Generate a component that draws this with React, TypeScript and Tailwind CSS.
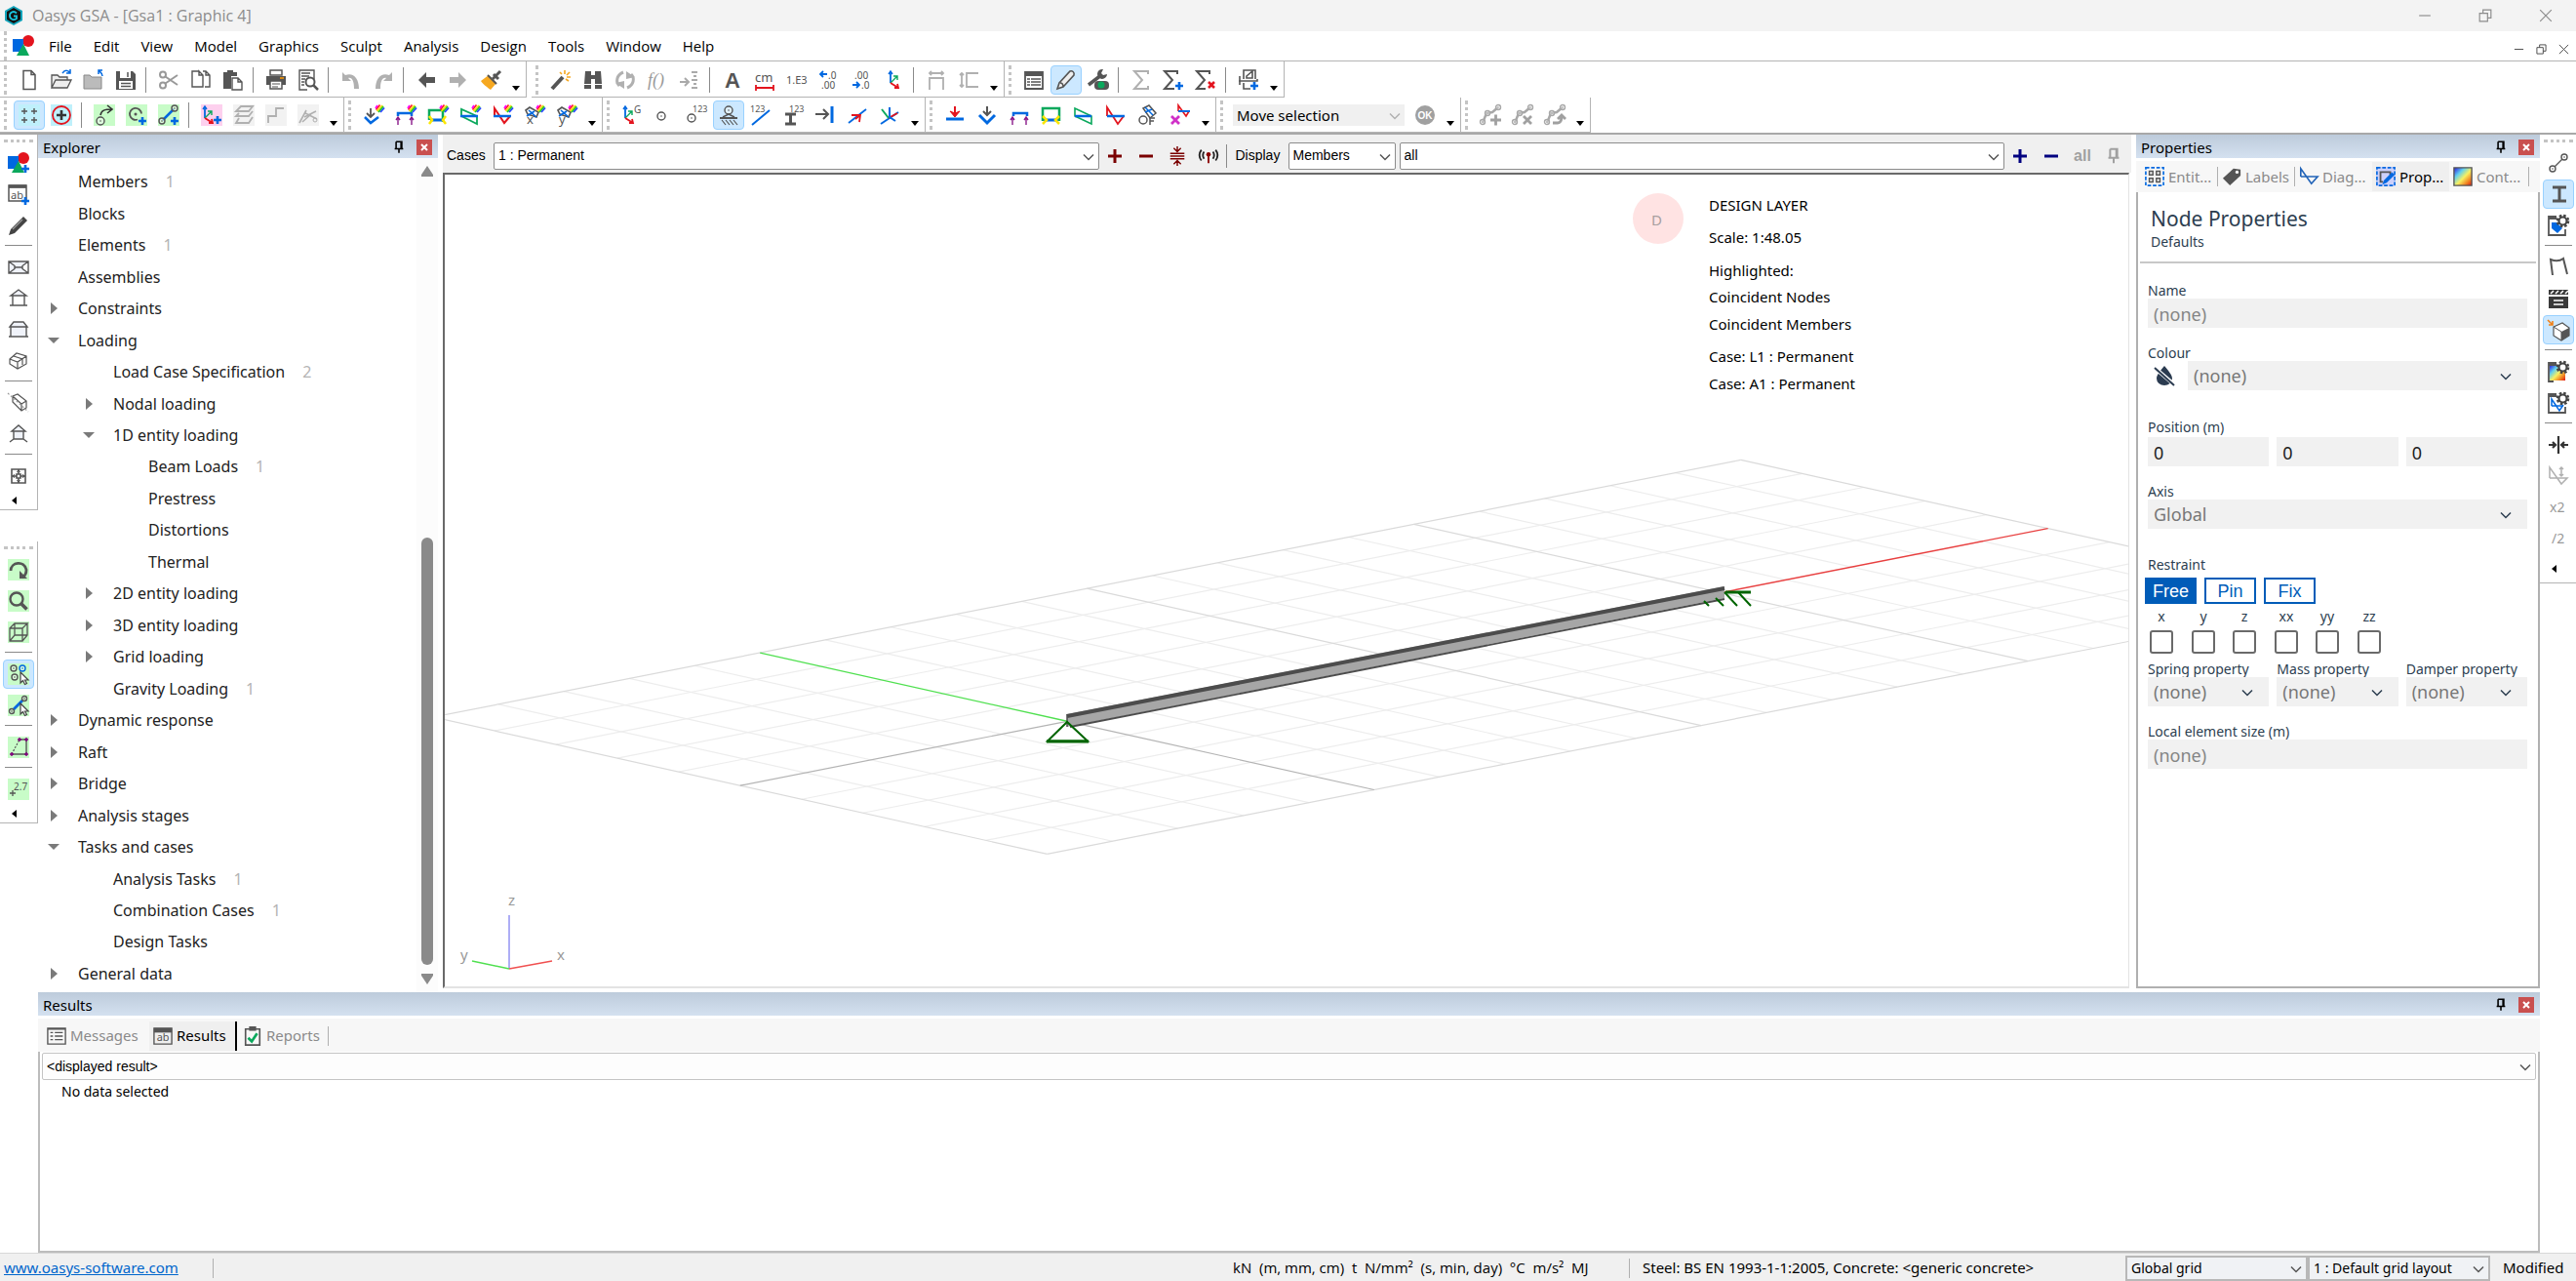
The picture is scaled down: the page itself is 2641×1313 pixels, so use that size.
import { useState } from "react";
import type { ReactNode } from "react";
import clsx from "clsx";

const INK = "#555555";
const BLUE = "#0068e0";
const RED = "#e3141e";
const GREEN = "#0aa85c";
const PURPLE = "#8a1a8a";
const GREY = "#b0b0b0";

/* ---------- icon building blocks ---------- */

function Plus({ x, y, color = BLUE }: { x: number; y: number; color?: string }) {
  return <path d={`M${x - 4} ${y}h8M${x} ${y - 4}v8`} stroke={color} strokeWidth="2.6" />;
}

function Cross({ x, y, color = RED }: { x: number; y: number; color?: string }) {
  return <path d={`M${x - 3} ${y - 3}l6 6m0-6l-6 6`} stroke={color} strokeWidth="2.6" />;
}

function Dot({ x, y, r = 3, color = INK }: { x: number; y: number; r?: number; color?: string }) {
  return (
    <g>
      <circle cx={x} cy={y} r={r} fill="#fff" fillOpacity="0.4" stroke={color} strokeWidth="1.4" />
      <circle cx={x} cy={y} r="0.8" fill={color} />
    </g>
  );
}

function Tile({ fill }: { fill: string }) {
  return <path d="M0 0h22v22H0z" fill={fill} />;
}

function Ball() {
  return (
    <g strokeWidth="1.8" fill="none">
      <path d="M13.500 5.500l4-5" stroke="#f22" />
      <path d="M14.500 7l5.500-6" stroke="#fd0" />
      <path d="M16 8l5-6" stroke="#2c2" />
      <path d="M18 8l4-4.500" stroke="#24f" />
      <path d="M13 4l2-3" stroke="#f0f" />
    </g>
  );
}

function Gear() {
  return (
    <g>
      <circle cx="15.500" cy="6.500" r="5.600" fill="none" stroke="#444" strokeWidth="2.400" strokeDasharray="2.500 1.900" />
      <circle cx="15.500" cy="6.500" r="4" fill="#fff" stroke="#444" strokeWidth="2.200" />
    </g>
  );
}

function Label({ x, y, size, color = INK, children }: { x: number; y: number; size: number; color?: string; children: string }) {
  return (
    <text x={x} y={y} fontSize={size} fill={color} stroke="none" fontFamily="Noto Sans, sans-serif">
      {children}
    </text>
  );
}

function Triad({ x = 0 }: { x?: number }) {
  return (
    <g fill="none" strokeWidth="1.800">
      <path d={`M${x + 4} 2v12`} stroke={BLUE} />
      <path d={`M${x + 2} 5l2-3 2 3`} stroke={BLUE} strokeWidth="1.400" />
      <path d={`M${x + 4} 14l7-7m-4 0h4v4`} stroke={GREEN} strokeWidth="1.400" />
      <path d={`M${x + 4} 14l8 5m-1-4l1 4h-4`} stroke={RED} />
    </g>
  );
}

function Member({ color = "#a8a8a8" }: { color?: string }) {
  return (
    <g>
      <path d="M3 19l4-10 6-1 6-5" stroke={color} strokeWidth="2.500" />
      <Dot x={3} y={18} r={2.5} color={color} />
      <Dot x={8} y={9} r={2.5} color={color} />
      <Dot x={19} y={3} r={2.5} color={color} />
    </g>
  );
}

const cursor = <path d="M13 9v11l2.500-2.500 2 4 2-1-2-3.500h3.500z" fill="#fff" stroke="#444" strokeWidth="1.200" />;
const shapes = (
  <g>
    <circle cx="16" cy="6" r="6" fill={RED} />
    <path d="M0 4h11v13H0z" fill={BLUE} />
    <path d="M11 9l6 12H4z" fill={GREEN} />
  </g>
);
const windowFrame = <path d="M1 2h18v16H1zM1 4h18" stroke={INK} strokeWidth="1.500" />;

const ICONS: Record<string, ReactNode> = {
  new: <path d="M5 1.500h8l4 4v15H5zM13 1.500v4h4" stroke={INK} strokeWidth="1.500" />,
  open: (
    <g>
      <path d="M1 19V6h6l2 2h8v3M1 19l4-8h16l-4 8z" fill="#eee" stroke={INK} strokeWidth="1.300" />
      <path d="M12 4c3-4 6-3 8 0m0-4v4h-4" stroke={BLUE} strokeWidth="1.500" />
    </g>
  ),
  closeFile: (
    <g>
      <path d="M1 6h6l2 2h10v12H1z" fill="#bbb" stroke="#888" />
      <path d="M20 7c0-3-2-4-4-6m0 4V1h4" stroke={BLUE} strokeWidth="1.500" />
    </g>
  ),
  save: (
    <g>
      <path d="M1 2h17l3 3v16H1z" fill={INK} />
      <path d="M5 2h11v7H5zM4 12h14v8H4z" fill="#fff" />
      <path d="M6 14.500h10M6 17.500h10M13 3v5" stroke={INK} strokeWidth="1.500" />
    </g>
  ),
  cut: (
    <g stroke="#999" strokeWidth="2">
      <circle cx="5" cy="5.500" r="3" />
      <circle cx="5" cy="16.500" r="3" />
      <path d="M7.500 7.500L20 16M7.500 14.500L20 6" />
    </g>
  ),
  copy: <path d="M9 2H2v16h11V6L9 2v4h4M13 2h3l4 4v12h-5M16 2v4h4" stroke={INK} strokeWidth="1.400" />,
  paste: (
    <g>
      <path d="M1 3h4V1h6v2h4v4H9v13H1z" fill={INK} />
      <path d="M10 9h6l4 4v8H10zM16 9v4h4" fill="#fff" stroke={INK} strokeWidth="1.400" />
    </g>
  ),
  print: (
    <g>
      <path d="M5 1h12v5H5z" stroke={INK} strokeWidth="1.500" />
      <path d="M1 7h20v9H1z" fill={INK} />
      <path d="M5 12h12v8H5z" fill="#fff" stroke={INK} strokeWidth="1.500" />
      <path d="M7 15h8M7 18h6" stroke={INK} />
      <path d="M15 9h4" stroke="#f90" strokeWidth="1.500" />
    </g>
  ),
  preview: (
    <g>
      <path d="M17 10V1H2v20h8M4 4h9M4 7h8M4 10h4M4 13h3M4 16h3" stroke={INK} strokeWidth="1.400" />
      <circle cx="13" cy="13" r="4.500" fill="#fff" stroke={INK} strokeWidth="2" />
      <path d="M16 16l5 5" stroke={INK} strokeWidth="2.500" />
    </g>
  ),
  undo: <path d="M2 3v9h9L8 9c4-1 6 3 6 11h5C19 9 13 3 5 6z" fill={GREY} />,
  redo: <path d="M20 3v9h-9l3-3c-4-1-6 3-6 11H3C3 9 9 3 17 6z" fill={GREY} />,
  back: <path d="M3 11l8-8v5h9v6h-9v5z" fill={INK} />,
  forward: <path d="M19 11l-8-8v5H2v6h9v5z" fill={GREY} />,
  brush: (
    <g>
      <path d="M21 2l-8 8M14 5l5 5" stroke={INK} strokeWidth="3" />
      <path d="M9 6l8 8-6 7C8 19 3 15 1 12z" fill="#f6a820" />
      <path d="M8 6l9 9" stroke={INK} strokeWidth="2" />
    </g>
  ),
  wand: (
    <g>
      <path d="M2 20L13 8" stroke={INK} strokeWidth="4" />
      <path d="M15 1v4M10 3l2 2M20 3l-3 3M21 8h-4M19 12l-3-2" stroke="#f6a820" strokeWidth="1.600" />
    </g>
  ),
  find: (
    <g fill={INK}>
      <path d="M3 2h6v4h4V2h6l1 13h-7v-5H9v5H2zM2 16h7v4H2zM13 16h7v4h-7z" />
    </g>
  ),
  refresh: (
    <g>
      <path d="M9 3C2 6 1 13 5 17M13 19c7-3 8-10 4-14" stroke={GREY} strokeWidth="3" />
      <path d="M1 14l9-2v8zM21 8l-9 2V2z" fill={GREY} />
    </g>
  ),
  fx: <text x="1" y="17" fontSize="18" fontStyle="italic" fill="#999" fontFamily="Liberation Serif, serif">f()</text>,
  indent: <path d="M1 13h8m-3-4l4 4-4 4M13 3h6M15 7h3M13 11h6M15 15h3M13 19h6" stroke="#aaa" strokeWidth="2" />,
  font: <text x="3" y="19" fontSize="22" fontWeight="700" fill={INK} fontFamily="Liberation Sans, sans-serif">A</text>,
  units: (
    <g>
      <Label x={1} y={13} size={13}>cm</Label>
      <path d="M2 19h18M2 16v6M20 16v6" stroke={RED} strokeWidth="1.800" />
    </g>
  ),
  engineering: <Label x={0} y={15} size={11}>1.E3</Label>,
  lessDecimals: (
    <g>
      <Label x={10} y={10} size={10}>.0</Label>
      <Label x={3} y={20} size={10}>.00</Label>
      <path d="M9 5H2m3-3L2 5l3 3" stroke={BLUE} strokeWidth="1.800" />
    </g>
  ),
  moreDecimals: (
    <g>
      <Label x={4} y={10} size={10}>.00</Label>
      <Label x={11} y={20} size={10}>.0</Label>
      <path d="M2 16h7m-3-3l3 3-3 3" stroke={BLUE} strokeWidth="1.800" />
    </g>
  ),
  axes: <Triad x={4} />,
  spaceX: <path d="M4 4h14M6 2L4 4l2 2M16 2l2 2-2 2M4 21V9h14v12" stroke={GREY} strokeWidth="1.800" />,
  spaceY: <path d="M4 4v14M2 6l2-2 2 2M2 16l2 2 2-2M21 4H9v14h12" stroke={GREY} strokeWidth="1.800" />,
  list: (
    <g>
      <path d="M2 3h18v17H2z" stroke={INK} strokeWidth="1.800" />
      <path d="M2 5h18" stroke={INK} strokeWidth="4" />
      <path d="M4 10h3m1 0h10M4 13h3m1 0h10M4 16h3m1 0h10" stroke={INK} strokeWidth="1.600" />
    </g>
  ),
  pencil: <path d="M2 20l2-6L15 2c2-1 5 1 4 4L8 18zM5 14c2 0 3 1 3 4" fill="#eee" stroke={INK} strokeWidth="1.600" />,
  pencilDark: (
    <g>
      <path d="M1 21l2-6L16 2l4 4L7 19z" fill="#444" />
      <path d="M5 15L15 5" stroke="#999" strokeWidth="1.200" />
    </g>
  ),
  tools: (
    <g>
      <path d="M1 16L14 6" stroke={INK} strokeWidth="3.500" />
      <path d="M20 5a5 5 0 1 1-4-5l-2 4 2 2z" fill={INK} />
      <rect x="7" y="12" width="15" height="9" rx="4" fill={INK} />
      <circle cx="14" cy="16" r="3.500" fill={GREEN} />
    </g>
  ),
  sum: <path d="M18 5V2H4l8 9-8 9h14v-3" stroke={GREY} strokeWidth="2" />,
  sumAdd: (
    <g>
      <path d="M15 5V2H2l8 9-8 9h10" stroke={INK} strokeWidth="2" />
      <Plus x={17} y={17} />
    </g>
  ),
  sumDelete: (
    <g>
      <path d="M15 5V2H2l8 9-8 9h9" stroke={INK} strokeWidth="2" />
      <Cross x={17} y={16} />
    </g>
  ),
  plotAdd: (
    <g>
      <path d="M6 10V1h12v9M2 7v9M1 12h19v-2M6 14v6h7M9 9V7l6-5v7z" stroke={INK} strokeWidth="1.600" />
      <Plus x={17} y={17} />
    </g>
  ),
  gridPoints: (
    <g>
      <Tile fill="#bff0fb" />
      <path d="M3 7h6M6 4v6M13 7h6M16 4v6M3 16h6M6 13v6M13 16h6M16 13v6" stroke={INK} strokeWidth="1.400" />
    </g>
  ),
  addNode: (
    <g>
      <Tile fill="#bff0fb" />
      <circle cx="11" cy="11" r="9" stroke={RED} strokeWidth="1.800" />
      <path d="M6 11h10M11 6v10" stroke="#333" strokeWidth="2.600" />
    </g>
  ),
  moveArc: (
    <g>
      <Tile fill="#c8fcc8" />
      <Dot x={7} y={17} r={4} />
      <path d="M7 11c1-5 4-6 12-6M14 1l5 4-5 4" stroke="#333" strokeWidth="1.600" />
    </g>
  ),
  nodeAdd: (
    <g>
      <Tile fill="#c8fcc8" />
      <path d="M12 15.500a6 6 0 1 1 4-6" stroke={INK} strokeWidth="1.800" />
      <circle cx="10" cy="10" r="1.500" fill={INK} />
      <Plus x={17} y={17} />
    </g>
  ),
  memberAdd: (
    <g>
      <Tile fill="#c8fcc8" />
      <path d="M5 16L16 5" stroke={BLUE} strokeWidth="2.500" />
      <Dot x={4} y={17} />
      <Dot x={17} y={4} />
      <Plus x={17} y={17} />
    </g>
  ),
  axesAdd: (
    <g>
      <Tile fill="#fdd0ee" />
      <Triad />
      <Plus x={17} y={16} />
    </g>
  ),
  storeys: (
    <g>
      <Tile fill="#f2f2f2" />
      <path d="M8 2h12l-4 5H3zM6 9L3 12h13l4-5M6 14l-3 5h13l4-6" stroke={GREY} strokeWidth="1.800" />
    </g>
  ),
  step: (
    <g>
      <Tile fill="#f2f2f2" />
      <path d="M3 19v-7h8V4h8" stroke={GREY} strokeWidth="1.800" />
    </g>
  ),
  cutSection: (
    <g>
      <Tile fill="#f2f2f2" />
      <path d="M2 19L9 6M8 9l12 6M7 13l12-6M5 18l9-8" stroke={GREY} strokeWidth="1.600" />
      <circle cx="18" cy="16" r="2" stroke={GREY} />
    </g>
  ),
  contourNode: (
    <g>
      <path d="M8 4v8M4 9l4 4 4-4" stroke={INK} strokeWidth="1.800" />
      <path d="M2 13l6 6 8-6" stroke={BLUE} strokeWidth="2.500" />
      <Ball />
    </g>
  ),
  contourBeam: (
    <g>
      <path d="M3 12V9h14v3" stroke={BLUE} strokeWidth="2.500" />
      <path d="M3 21v-7M1 16l2-3 2 3M17 21v-7M15 16l2-3 2 3" stroke={PURPLE} strokeWidth="1.400" />
      <Ball />
    </g>
  ),
  contourElement: (
    <g>
      <path d="M2 16V6h14v12" stroke={GREEN} strokeWidth="2.500" />
      <path d="M3 16h14" stroke={BLUE} strokeWidth="3" />
      <path d="M2 12l3 4-3 4M19 12l-3 4 3 4" stroke="#fbe600" strokeWidth="2.500" />
      <Ball />
    </g>
  ),
  contourShear: (
    <g>
      <path d="M2 5v7l16 8v-8z" stroke={GREEN} strokeWidth="1.800" />
      <path d="M1 12h18" stroke={BLUE} strokeWidth="2.500" />
      <Ball />
    </g>
  ),
  contourMoment: (
    <g>
      <path d="M3 12V4l10 15 6-7" stroke={RED} strokeWidth="2" />
      <path d="M2 12h18" stroke={BLUE} strokeWidth="2.500" />
      <Ball />
    </g>
  ),
  contourX: (
    <g>
      <path d="M2 6l4-3 9 5-2 5-9-3z" stroke={INK} strokeWidth="1.600" />
      <path d="M3 12l8-5M5 6l8 7" stroke={BLUE} strokeWidth="1.600" />
      <Label x={3} y={20} size={13}>x</Label>
      <Ball />
    </g>
  ),
  contourY: (
    <g>
      <path d="M2 6l4-3 9 5-2 5-9-3z" stroke={INK} strokeWidth="1.600" />
      <path d="M3 12l8-5M5 6l8 7" stroke={BLUE} strokeWidth="1.600" />
      <Label x={3} y={20} size={13}>y</Label>
      <Ball />
    </g>
  ),
  axesG: (
    <g>
      <Triad />
      <Label x={13} y={9} size={10}>G</Label>
    </g>
  ),
  node: <Dot x={8} y={12} r={4} />,
  node123: (
    <g>
      <Dot x={6} y={14} r={4} />
      <Label x={7} y={8} size={9}>123</Label>
    </g>
  ),
  support: (
    <g>
      <Dot x={11} y={6} r={4} />
      <path d="M5 13l6-3 6 3" stroke={INK} strokeWidth="1.500" />
      <path d="M2 14h18" stroke={INK} strokeWidth="2" />
      <path d="M4 16l4 5M8 16l4 5M12 16l4 5M16 16l4 5" stroke={INK} strokeWidth="1.200" />
    </g>
  ),
  line123: (
    <g>
      <path d="M2 21L20 6" stroke={BLUE} strokeWidth="2" />
      <Label x={0} y={8} size={9}>123</Label>
    </g>
  ),
  section123: (
    <g>
      <path d="M3 10h11M3 20h11M8.500 10v10" stroke={INK} strokeWidth="3" />
      <Label x={7} y={8} size={9}>123</Label>
    </g>
  ),
  fixity: (
    <g>
      <path d="M1 10h13m-5-5l5 5-5 5" stroke={INK} strokeWidth="2" />
      <path d="M18 2v17" stroke={BLUE} strokeWidth="3" />
    </g>
  ),
  direction: (
    <g>
      <path d="M2 19L20 5" stroke={BLUE} strokeWidth="1.800" />
      <path d="M5 11h9l-1 7M14 11l-5 4" stroke={RED} strokeWidth="1.800" />
    </g>
  ),
  localAxes: (
    <g>
      <path d="M2 20L20 8" stroke={BLUE} strokeWidth="2" />
      <path d="M10 14l9-5" stroke={RED} strokeWidth="2" />
      <path d="M10 14L3 5" stroke={GREEN} strokeWidth="2" />
      <path d="M11 3v10l6 4" stroke={BLUE} strokeWidth="2" />
    </g>
  ),
  loadPoint: (
    <g>
      <path d="M11 2v8" stroke={RED} strokeWidth="2" />
      <path d="M6 7l5 6 5-6-5 2z" fill={RED} stroke={RED} />
      <path d="M2 15h18" stroke={BLUE} strokeWidth="3" />
    </g>
  ),
  loadNode: (
    <g>
      <path d="M11 2v8M7 7l4 4 4-4" stroke={INK} strokeWidth="2" />
      <path d="M3 11l8 8 8-8" stroke={BLUE} strokeWidth="3" />
    </g>
  ),
  reaction: (
    <g>
      <path d="M5 12V9h14v3" stroke={BLUE} strokeWidth="2.500" />
      <path d="M4 21v-8M2 16l2-3 2 3M18 21v-8M16 16l2-3 2 3" stroke={PURPLE} strokeWidth="1.400" />
    </g>
  ),
  elementForce: (
    <g>
      <path d="M2 17V4h17v13" stroke={GREEN} strokeWidth="2.500" />
      <path d="M3 16h15" stroke={BLUE} strokeWidth="3" />
      <path d="M2 12l4 4-4 4M19 12l-4 4 4 4" stroke="#fbe600" strokeWidth="2.500" />
    </g>
  ),
  shear: (
    <g>
      <path d="M2 4v8l17 8v-8z" stroke={GREEN} strokeWidth="1.600" />
      <path d="M2 12h17" stroke={BLUE} strokeWidth="2.500" />
    </g>
  ),
  moment: (
    <g>
      <path d="M2 12V3l11 17 6-8" stroke={RED} strokeWidth="1.800" />
      <path d="M2 12h18" stroke={BLUE} strokeWidth="2.500" />
    </g>
  ),
  mode: (
    <g stroke={INK} strokeWidth="1.500">
      <path d="M6 4l6-3 7 8-6 5z" />
      <path d="M8 8l7-3M8 3l8 8" stroke={BLUE} />
      <circle cx="6" cy="16" r="4" />
      <path d="M13 21v-7h5M13 17h4" />
    </g>
  ),
  deleteDiagram: (
    <g>
      <path d="M2 12l8 8m0-8l-8 8" stroke="#d030c8" strokeWidth="2.800" />
      <path d="M9 7V1l8 11 3-5" stroke={RED} strokeWidth="1.600" />
      <path d="M9 7h12" stroke={BLUE} strokeWidth="2" />
    </g>
  ),
  ok: (
    <g>
      <circle cx="11" cy="11" r="10" fill="#a0a0a0" />
      <text x="11" y="15" fontSize="10" fontWeight="700" fill="#fff" textAnchor="middle" fontFamily="Liberation Sans, sans-serif">OK</text>
    </g>
  ),
  splitAdd: (
    <g>
      <Member />
      <path d="M11 16h11M16.500 10.500v11" stroke="#a0a0a0" strokeWidth="2.800" />
    </g>
  ),
  splitDelete: (
    <g>
      <Member />
      <path d="M12 12l8 8m0-8l-8 8" stroke="#a0a0a0" strokeWidth="2.800" />
    </g>
  ),
  splitTurn: (
    <g>
      <Member />
      <path d="M9 19h5c3 0 4-2 4-7M14 15l4-4 4 4" stroke="#a0a0a0" strokeWidth="2.800" />
    </g>
  ),
  shapesAdd: (
    <g>
      {shapes}
      <Plus x={18} y={17} />
    </g>
  ),
  outputAdd: (
    <g>
      {windowFrame}
      <path d="M1 3h18" stroke={INK} strokeWidth="3" />
      <Label x={3} y={16} size={11}>ab</Label>
      <Plus x={18} y={18} />
    </g>
  ),
  plan: <path d="M1 5h20v12H1zM1 5l6 4.500v3L1 17M21 5l-6 4.500v3l6 4.500M7 11h8" fill="#f0f3fa" stroke={INK} strokeWidth="1.400" />,
  front: <path d="M5 18V7M17 18V7M2 18h18M3 8h16L11 2z" stroke={INK} strokeWidth="1.400" fill="#f0f3fa" />,
  side: <path d="M3 18V8h16v10M1 18h20M2 8l4-5h10l4 5z" stroke={INK} strokeWidth="1.400" fill="#f0f3fa" />,
  isometric: <path d="M2 9l7-6 10 3v8l-9 5-8-5zM2 9l8 3 9-6M10 12v7M6 6l9 3v6" stroke={INK} strokeWidth="1.200" />,
  section3d: (
    <g stroke={INK} strokeWidth="1.200">
      <path d="M5 4l5-2 9 7v7l-5 3-9-9zM5 4l9 8v7M14 12l5-3" />
      <path d="M0 1l21 19" strokeDasharray="2 2" stroke="#999" />
    </g>
  ),
  perspective: <path d="M6 16V8h10v8zM6 16l-4 3M16 16l4 3M4 8h14L11 2z" stroke={INK} strokeWidth="1.400" fill="#f0f3fa" />,
  fit: (
    <g stroke={INK}>
      <path d="M4 4h14v14H4z" strokeWidth="1.600" />
      <path d="M11 4v5M11 13v5M4 11h5M13 11h5M9 9h4v4H9z" strokeWidth="1.600" />
      <path d="M9.500 7l1.500-2 1.500 2M9.500 15l1.500 2 1.500-2M7 9.500L5 11l2 1.500M15 9.500l2 1.500-2 1.500" strokeWidth="1.200" />
    </g>
  ),
  rotate: (
    <g>
      <Tile fill="#c8fcc8" />
      <path d="M3 12c0-9 14-11 16-1 0 4-1 6-4 8" stroke={INK} strokeWidth="2.800" />
      <path d="M12 12v8h8z" fill={INK} />
    </g>
  ),
  zoom: (
    <g>
      <Tile fill="#c8fcc8" />
      <circle cx="9" cy="9" r="6.500" stroke={INK} strokeWidth="2.400" />
      <path d="M13.500 13.500l6 6" stroke={INK} strokeWidth="3.500" />
    </g>
  ),
  volume: (
    <g>
      <Tile fill="#c8fcc8" />
      <path d="M2 7h13v13H2zM2 7l5-5h13l-5 5M20 2v12l-5 6M7 2v12h13M7 14l-5 6" stroke={INK} strokeWidth="1.300" />
    </g>
  ),
  selectNodes: (
    <g>
      <Tile fill="#c8fcc8" />
      <Dot x={6} y={5} />
      <Dot x={15} y={5} color={BLUE} />
      <Dot x={7} y={14} />
      {cursor}
    </g>
  ),
  selectMembers: (
    <g>
      <Tile fill="#c8fcc8" />
      <path d="M6 15L15 6" stroke={BLUE} strokeWidth="2.800" />
      <Dot x={4} y={17} r={2.5} />
      <Dot x={17} y={4} r={2.5} />
      {cursor}
    </g>
  ),
  polygon: (
    <g>
      <Tile fill="#c8fcc8" />
      <path d="M12 3h7v15H4" stroke={INK} strokeWidth="1.400" />
      <path d="M4 18l8-15" stroke={INK} strokeWidth="1.200" strokeDasharray="2 1.500" />
      <path d="M10 3h4M12 1v4M17 3h4M19 1v4M17 18h4M19 16v4M2 18h4M4 16v4" stroke="#80007c" strokeWidth="1.400" />
    </g>
  ),
  coordinate: (
    <g>
      <Tile fill="#c8fcc8" />
      <Label x={6} y={12} size={10}>2.7</Label>
      <path d="M2 15h6M5 12v6" stroke={INK} strokeWidth="1.300" />
    </g>
  ),
  link: (
    <g>
      <path d="M7 15l8-8" stroke={INK} strokeWidth="1.200" />
      <Dot x={5} y={17} />
      <Dot x={17} y={5} />
    </g>
  ),
  section: <path d="M5 4h14M5 18h14M12 4v14" stroke={INK} strokeWidth="3" />,
  labelSettings: (
    <g>
      <path d="M9 2H1v19h17v-6M1 4h8" stroke={INK} strokeWidth="1.800" />
      <path d="M4 8h5l6 6-5 5-6-5z" fill={BLUE} />
      <Gear />
    </g>
  ),
  deformed: <path d="M5 19L3 3c5 2 9 2 13-1l4 16" stroke={INK} strokeWidth="2" />,
  animate: (
    <g>
      <path d="M1 9h20v12H1zM1 2h20v5H1z" fill="#3a3a3a" />
      <path d="M3 6l3-3M8 6l3-3M13 6l3-3M18 6l3-3M6 13h10M6 17h10" stroke="#fff" strokeWidth="1.500" />
    </g>
  ),
  solid: (
    <g>
      <path d="M6 8l9-4 7 5v8l-8 5-8-5z" fill="#fff" stroke={INK} strokeWidth="1.200" />
      <path d="M14 13l8-4v8l-8 5z" fill="#555" />
      <path d="M6 8l8 5v9" stroke={INK} />
      <path d="M0 1l5 5M5 2v4H1" stroke="#f08018" strokeWidth="1.600" />
    </g>
  ),
  contourSettings: (
    <g>
      <path d="M2 4h16v16H2z" fill="url(#spectrum)" />
      <path d="M9 2H1v19h5M1 4h8" stroke={INK} strokeWidth="1.800" />
      <Gear />
    </g>
  ),
  diagramSettings: (
    <g>
      <path d="M9 2H1v19h17v-6M1 4h8" stroke={INK} strokeWidth="1.800" />
      <path d="M4 14V7l8 12 4-6M4 14h12" stroke={BLUE} strokeWidth="1.500" />
      <Gear />
    </g>
  ),
  mirror: <path d="M11 2v18M1 11h7m-3-3l3 3-3 3M21 11h-7m3-3l-3 3 3 3" stroke="#333" strokeWidth="2.200" />,
  scaleDiagram: <path d="M2 13V2l12 17 6-6H2M14 2v9M12 4l2-2 2 2M12 9l2 2 2-2" stroke={GREY} strokeWidth="1.500" />,
  double: <Label x={2} y={16} size={14} color="#999">x2</Label>,
  half: <Label x={4} y={16} size={14} color="#999">/2</Label>,
  entities: (
    <g>
      <path d="M1 1h20v20H1z" stroke={BLUE} strokeWidth="1.800" strokeDasharray="4 2" />
      <path d="M5 5h4v4H5zM13 5h4v4h-4zM5 13h4v4H5zM13 13h4v4h-4z" stroke={INK} strokeWidth="1.600" />
    </g>
  ),
  tag: (
    <g>
      <path d="M1 13L13 2l8 1v7L9 21z" fill={INK} />
      <circle cx="17" cy="6" r="1.800" fill="#fff" />
    </g>
  ),
  diagram: <path d="M2 11V2l12 17 7-8H2" stroke="#2264b8" strokeWidth="1.800" />,
  edit: (
    <g>
      <Tile fill="#ccd0fa" />
      <path d="M1 1h20v20H1z" stroke={BLUE} strokeWidth="1.800" strokeDasharray="4 2" />
      <path d="M8 17H5V6h11v3" stroke={INK} strokeWidth="2" />
      <path d="M7 20l2-5 9-9 3 3-9 9z" fill={BLUE} />
    </g>
  ),
  contours: <path d="M1 1h20v20H1z" fill="url(#spectrum)" stroke={INK} strokeWidth="1.500" />,
  messages: <path d="M1 2h20v18H1zM1 3h20M4 7h3M4 11h3M4 15h3M9 7h9M9 11h9M9 15h9" stroke={INK} strokeWidth="1.500" />,
  output: (
    <g>
      <path d="M1 2h20v18H1z" stroke={INK} strokeWidth="1.500" />
      <path d="M1 4.500h20" stroke={INK} strokeWidth="5" />
      <Label x={4} y={17} size={12}>ab</Label>
    </g>
  ),
  report: (
    <g>
      <path d="M3 3h16v18H3z" stroke={INK} strokeWidth="1.800" />
      <path d="M7 0h8v5H7z" fill={INK} />
      <path d="M6 13l4 4 6-9" stroke={GREEN} strokeWidth="3" />
    </g>
  ),
  noColour: (
    <g fill="#2b3b50">
      <path d="M11 1c4 5 8 9 8 13a8 7 0 0 1-16 0c0-4 4-8 8-13z" />
      <path d="M1 3l21 18" stroke="#fff" strokeWidth="4" />
      <path d="M1 3l20 18" stroke="#2b3b50" strokeWidth="2" />
    </g>
  ),
  pin: <path d="M7 3h8v10M7 3v10M5 13h12M11 13v6M14 3v10" stroke="currentColor" strokeWidth="2.200" />,
  compress: <path d="M3 8h16M3 11h16M3 14h16M11 0v6M7 2l4 4 4-4M11 22v-6M7 20l4-4 4 4" stroke="#7a0000" strokeWidth="1.600" />,
  beacon: (
    <g strokeWidth="2">
      <path d="M3 4c-3 4-3 8 0 12M6 6c-2 3-2 5 0 8M19 4c3 4 3 8 0 12M16 6c2 3 2 5 0 8" stroke="#222" />
      <path d="M11 10v9" stroke="#8a0000" />
      <circle cx="11" cy="9" r="2.500" fill="#8a0000" />
    </g>
  ),
};

function Icon({ name, size = "size-[22px]" }: { name: string; size?: string }) {
  return (
    <svg viewBox="0 0 22 22" className={clsx("shrink-0 overflow-visible", size)} fill="none" aria-hidden="true">
      {ICONS[name]}
    </svg>
  );
}

/* ---------- toolbars ---------- */

type Tool = string;
const SEP = "|";

const FILE_TOOLS: Tool[] = ["new", "open", "closeFile", "save", SEP, "cut", "copy", "paste", SEP, "print", "preview", SEP, "undo", "redo", SEP, "back", "forward", "brush"];
const FORMAT_TOOLS: Tool[] = ["wand", "find", "refresh", "fx", "indent", SEP, "font", "units", "engineering", "lessDecimals", "moreDecimals", "axes", SEP, "spaceX", "spaceY"];
const MODEL_TOOLS: Tool[] = ["list", "pencil", "tools", SEP, "sum", "sumAdd", "sumDelete", SEP, "plotAdd"];
const SCULPT_TOOLS: Tool[] = ["gridPoints", "addNode", SEP, "moveArc", "nodeAdd", "memberAdd", SEP, "axesAdd", "storeys", "step", "cutSection"];
const CONTOUR_TOOLS: Tool[] = ["contourNode", "contourBeam", "contourElement", "contourShear", "contourMoment", "contourX", "contourY"];
const LABEL_TOOLS: Tool[] = ["axesG", "node", "node123", "support", "line123", "section123", "fixity", "direction", "localAxes"];
const DIAGRAM_TOOLS: Tool[] = ["loadPoint", "loadNode", "reaction", "elementForce", "shear", "moment", "mode", "deleteDiagram"];
const SPLIT_TOOLS: Tool[] = ["splitAdd", "splitDelete", "splitTurn"];

const VIEW_TOOLS: Tool[] = ["shapesAdd", "outputAdd", "pencilDark", SEP, "plan", "front", "side", "isometric", SEP, "section3d", "perspective", SEP, "fit"];
const MOUSE_TOOLS: Tool[] = ["rotate", "zoom", "volume", SEP, "selectNodes", "selectMembers", SEP, "polygon", SEP, "coordinate"];
const DISPLAY_TOOLS: Tool[] = ["link", "section", "labelSettings", SEP, "deformed", "animate", "solid", SEP, "contourSettings", "diagramSettings", SEP, "mirror", "scaleDiagram", "double", "half"];

const ACTIVE = ["pencil", "gridPoints", "support", "selectNodes", "section", "solid"];

function ToolButton({ name }: { name: Tool }) {
  return (
    <button
      type="button"
      aria-label={name}
      className={clsx(
        "flex h-[30px] w-8 items-center justify-center rounded-sm border",
        ACTIVE.includes(name) ? "border-[#99d1ff] bg-[#cce8ff]" : "border-transparent",
      )}
    >
      <Icon name={name} />
    </button>
  );
}

function Grip() {
  return <div className="ml-1 h-[30px] w-[9px] shrink-0 border-l-[3px] border-dotted border-[#c4c4c4]" />;
}

function MoreButton() {
  return (
    <button type="button" aria-label="More buttons" className="flex h-[30px] w-5 items-end justify-center pb-1">
      <svg viewBox="0 0 8 5" className="w-2" aria-hidden="true">
        <path d="M0 0h8L4 5z" />
      </svg>
    </button>
  );
}

function ToolGroup({ tools = [], children }: { tools?: Tool[]; children?: ReactNode }) {
  return (
    <div className="flex h-full items-center border-r border-b border-[#b4b4b4] bg-white pt-px">
      <Grip />
      {children}
      {tools.map((tool, i) =>
        tool === SEP ? (
          <div key={i} className="ml-1 mr-[6px] h-[26px] w-px bg-[#8a8a8a]" />
        ) : (
          <div key={i} className="flex w-[33px] justify-center">
            <ToolButton name={tool} />
          </div>
        ),
      )}
      <MoreButton />
    </div>
  );
}

function SideTools({ tools, side }: { tools: Tool[]; side: "left" | "right" }) {
  return (
    <div className={clsx("flex flex-col items-center border-b border-[#b4b4b4] bg-white", side === "left" && "border-r")}>
      <div className="mt-[5px] mb-[5px] h-[3px] w-[30px] border-t-[3px] border-dotted border-[#c4c4c4]" />
      {tools.map((tool, i) =>
        tool === SEP ? (
          <div key={i} className="mt-1 mb-[6px] h-px w-7 bg-[#8a8a8a]" />
        ) : (
          <div key={i} className="flex h-8 items-center">
            <ToolButton name={tool} />
          </div>
        ),
      )}
      <button type="button" aria-label="More buttons" className={clsx("w-full pl-3", side === "left" ? "h-[18px]" : "h-[29px]")}>
        <svg viewBox="0 0 5 8" className="h-2 w-[5px]" aria-hidden="true">
          <path d="M5 0v8L0 4z" />
        </svg>
      </button>
    </div>
  );
}

function Chevron({ className }: { className?: string }) {
  return (
    <svg viewBox="0 0 12 8" className={clsx("pointer-events-none w-3", className)} fill="none" stroke="currentColor" aria-hidden="true">
      <path d="M1 1.500l5 5 5-5" strokeWidth="1.500" />
    </svg>
  );
}

type ComboProps = { label: string; value: string; className: string; height?: string; chevron?: string };

function Combo({ label, value, className, height = "h-7", chevron = "top-[10px] text-[#555]" }: ComboProps) {
  return (
    <div className={clsx("relative", height, className)}>
      <select aria-label={label} className="h-full w-full appearance-none bg-transparent px-1 outline-none">
        <option>{value}</option>
      </select>
      <Chevron className={clsx("absolute right-1", chevron)} />
    </div>
  );
}

function PanelHeader({ title }: { title: string }) {
  return (
    <div className="flex h-6 shrink-0 items-center justify-between bg-linear-to-b from-[#bdcbdb] to-[#d4e1f0] pt-px pr-[6px] pl-[5px] text-[15px] leading-6 text-black">
      <h2>{title}</h2>
      <div className="flex items-center gap-[10px]">
        <button type="button" aria-label={`Pin ${title}`}>
          <Icon name="pin" size="size-4" />
        </button>
        <button type="button" aria-label={`Close ${title}`} className="flex size-4 items-center justify-center bg-[#c9504f]">
          <svg viewBox="0 0 8 8" className="size-2" stroke="#fff" strokeWidth="2" aria-hidden="true">
            <path d="M1 1l6 6M7 1L1 7" />
          </svg>
        </button>
      </div>
    </div>
  );
}

/* ---------- explorer ---------- */

type TreeItem = { label: string; level: 0 | 1 | 2; count?: number; state?: "open" | "closed" };

const TREE: TreeItem[] = [
  { label: "Members", level: 0, count: 1 },
  { label: "Blocks", level: 0 },
  { label: "Elements", level: 0, count: 1 },
  { label: "Assemblies", level: 0 },
  { label: "Constraints", level: 0, state: "closed" },
  { label: "Loading", level: 0, state: "open" },
  { label: "Load Case Specification", level: 1, count: 2 },
  { label: "Nodal loading", level: 1, state: "closed" },
  { label: "1D entity loading", level: 1, state: "open" },
  { label: "Beam Loads", level: 2, count: 1 },
  { label: "Prestress", level: 2 },
  { label: "Distortions", level: 2 },
  { label: "Thermal", level: 2 },
  { label: "2D entity loading", level: 1, state: "closed" },
  { label: "3D entity loading", level: 1, state: "closed" },
  { label: "Grid loading", level: 1, state: "closed" },
  { label: "Gravity Loading", level: 1, count: 1 },
  { label: "Dynamic response", level: 0, state: "closed" },
  { label: "Raft", level: 0, state: "closed" },
  { label: "Bridge", level: 0, state: "closed" },
  { label: "Analysis stages", level: 0, state: "closed" },
  { label: "Tasks and cases", level: 0, state: "open" },
  { label: "Analysis Tasks", level: 1, count: 1 },
  { label: "Combination Cases", level: 1, count: 1 },
  { label: "Design Tasks", level: 1 },
  { label: "General data", level: 0, state: "closed" },
];

const INDENT = ["pl-[9px]", "pl-[45px]", "pl-[81px]"];

function Explorer() {
  return (
    <section className="flex w-[410px] shrink-0 flex-col">
      <PanelHeader title="Explorer" />
      <div className="flex min-h-0 flex-1">
        <ul className="flex min-w-0 flex-1 flex-col pt-2 pb-[3px] text-[16px] text-[#222]">
          {TREE.map((item) => (
            <li key={item.label} className={clsx("flex min-h-0 flex-1 items-center leading-6", INDENT[item.level])}>
              <svg viewBox="0 0 14 14" className="mr-[18px] size-[14px] shrink-0 fill-[#7a7a7a]" aria-hidden="true">
                {item.state === "closed" && <path d="M4 1v12l7-6z" />}
                {item.state === "open" && <path d="M1 4h12l-6 6z" />}
              </svg>
              {item.label}
              {item.count && <span className="ml-[18px] text-[#b4b4b4]">{item.count}</span>}
            </li>
          ))}
        </ul>
        <div className="flex w-[22px] flex-col items-center bg-[#fcfcfc] pt-2 pb-2">
          <svg viewBox="0 0 12 11" className="w-3 fill-[#8a8a8a]" aria-hidden="true">
            <path d="M6 0l6 9v2H0V9z" />
          </svg>
          <div className="flex-[370]" />
          <div className="w-3 flex-[437] rounded-full bg-[#8a8a8a]" />
          <svg viewBox="0 0 12 11" className="mt-[9px] w-3 fill-[#8a8a8a]" aria-hidden="true">
            <path d="M6 11l6-9V0H0v2z" />
          </svg>
        </div>
      </div>
    </section>
  );
}

/* ---------- graphic view ---------- */

// screen position of a grid point, grid axes run from -5 to 15 (x) and -5 to 5 (y)
function project(x: number, y: number) {
  return [1094 + x * 67.04 - y * 62.96, 738.3 - x * 13.18 - y * 14.04];
}

function GridLine({ from, to, stroke, width = 1.2 }: { from: [number, number]; to: [number, number]; stroke: string; width?: number }) {
  const [x1, y1] = project(...from);
  const [x2, y2] = project(...to);
  return <line x1={x1} y1={y1} x2={x2} y2={y2} stroke={stroke} strokeWidth={width} />;
}

const LEGEND: [number, string][] = [
  [215, "DESIGN LAYER"],
  [248, "Scale: 1:48.05"],
  [282, "Highlighted:"],
  [309, "Coincident Nodes"],
  [337, "Coincident Members"],
  [370, "Case: L1 : Permanent"],
  [398, "Case: A1 : Permanent"],
];

function ModelView() {
  const xs = Array.from({ length: 21 }, (_, i) => i - 5);
  const ys = Array.from({ length: 11 }, (_, i) => i - 5);
  return (
    <svg viewBox="456 179 1726 830" className="size-full" role="img" aria-label="Model view" fontFamily="Noto Sans, sans-serif">
      {xs.filter((x) => x % 5 !== 0).map((x) => (
        <GridLine key={`x${x}`} from={[x, -5]} to={[x, 5]} stroke="#ededed" />
      ))}
      {ys.filter((y) => y % 5 !== 0).map((y) => (
        <GridLine key={`y${y}`} from={[-5, y]} to={[15, y]} stroke="#ededed" />
      ))}
      {[-5, 5, 10, 15].map((x) => (
        <GridLine key={`mx${x}`} from={[x, -5]} to={[x, 5]} stroke="#dadada" />
      ))}
      {[-5, 5].map((y) => (
        <GridLine key={`my${y}`} from={[-5, y]} to={[15, y]} stroke="#dadada" />
      ))}
      <GridLine from={[-5, 0]} to={[0, 0]} stroke="#b4b4b4" />
      <GridLine from={[0, -5]} to={[0, 0]} stroke="#b4b4b4" />
      <GridLine from={[0, 0]} to={[15, 0]} stroke="#e84040" width={1.4} />
      <GridLine from={[0, 0]} to={[0, 5]} stroke="#50e050" width={1.4} />

      {/* beam */}
      <path d="M1094 731L1768 600v12L1094 744z" fill="#a6a6a6" />
      <path d="M1094 733L1768 602" stroke="#4c4c4c" strokeWidth="4" />
      <path d="M1097 744L1768 613" stroke="#4c4c4c" strokeWidth="1.8" />
      <path d="M1094 731v13" stroke="#4c4c4c" strokeWidth="1.5" />

      {/* supports */}
      <path d="M1094 739l-20 19.500h41z" fill="none" stroke="#006400" strokeWidth="2" />
      <path d="M1073 759h43" stroke="#006400" strokeWidth="3" />
      <path d="M1769 606h26" stroke="#006400" strokeWidth="3" />
      <path d="M1747 615l5 5M1759 612l8 8M1768 606l13 14M1782 606l13 14" stroke="#006400" strokeWidth="2" />

      {/* axis triad */}
      <path d="M522 992v-55" stroke="#7878f0" strokeWidth="1.2" />
      <path d="M522 992l44-8" stroke="#f05050" strokeWidth="1.4" />
      <path d="M522 992l-38-8" stroke="#50e050" strokeWidth="1.4" />
      <g fontSize="15" fill="#999">
        <text x="521" y="927">z</text>
        <text x="571" y="983">x</text>
        <text x="472" y="983">y</text>
      </g>

      <circle cx="1700" cy="223" r="26" fill="#ffe3e3" />
      <text x="1693" y="230" fontSize="15" fill="#a8a0a0">D</text>
      <g fontSize="15">
        {LEGEND.map(([y, line]) => (
          <text key={line} x="1752" y={y}>
            {line}
          </text>
        ))}
      </g>
    </svg>
  );
}

function Sign({ kind, color }: { kind: "plus" | "minus"; color: string }) {
  return (
    <svg viewBox="0 0 14 14" className="size-[14px]" stroke={color} strokeWidth="3" aria-hidden="true">
      <path d={kind === "plus" ? "M0 7h14M7 0v14" : "M0 7h14"} />
    </svg>
  );
}

function GraphicPane() {
  const iconButton = "flex w-8 justify-center";
  const field = "rounded-[2px] border border-[#8c8c8c] bg-white";
  return (
    <section className="flex min-w-0 flex-1 flex-col">
      <div className="flex h-[39px] shrink-0 items-center bg-[#f0f0f0] pl-1 pr-[2px] pt-1 font-['Liberation_Sans',sans-serif] text-[14px] text-black">
        <span className="w-12">Cases</span>
        <Combo label="Cases" value="1 : Permanent" className={clsx(field, "min-w-0 flex-[620]")} />
        <button type="button" aria-label="Next case" className={iconButton}>
          <Sign kind="plus" color="#7a0000" />
        </button>
        <button type="button" aria-label="Previous case" className={iconButton}>
          <Sign kind="minus" color="#7a0000" />
        </button>
        <button type="button" aria-label="Envelope" className={iconButton}>
          <Icon name="compress" size="size-5" />
        </button>
        <button type="button" aria-label="Dynamic" className={iconButton}>
          <Icon name="beacon" size="size-5" />
        </button>
        <div className="ml-[2px] mr-[9px] h-6 w-px bg-[#8a8a8a]" />
        <span className="w-[54px]">Display</span>
        <Combo label="Display" value="Members" className={clsx(field, "mr-1 w-[110px]")} />
        <Combo label="List" value="all" className={clsx(field, "min-w-0 flex-[620]")} />
        <button type="button" aria-label="Add to list" className={iconButton}>
          <Sign kind="plus" color="#000080" />
        </button>
        <button type="button" aria-label="Remove from list" className={iconButton}>
          <Sign kind="minus" color="#000080" />
        </button>
        <button type="button" className="w-8 text-[16px] font-bold text-[#a0a0a0]">
          all
        </button>
        <button type="button" aria-label="Pin view" className={clsx(iconButton, "text-[#a0a0a0]")}>
          <Icon name="pin" size="size-5" />
        </button>
      </div>
      <div className="mb-1 mr-[2px] min-h-0 flex-1 border-2 border-r border-b-2 border-t-[#696969] border-l-[#696969] border-r-[#e3e3e3] border-b-[#e3e3e3]">
        <ModelView />
      </div>
    </section>
  );
}

/* ---------- properties ---------- */

const PROPERTY_TABS = [
  { icon: "entities", label: "Entit..." },
  { icon: "tag", label: "Labels" },
  { icon: "diagram", label: "Diag..." },
  { icon: "edit", label: "Prop..." },
  { icon: "contours", label: "Cont..." },
];

const FIELD = "h-[30px] w-full bg-[#f1f1f1] px-[6px] pt-px text-[18px] outline-none";
const CAPTION = "block h-[18px] whitespace-nowrap leading-5";

function TextField({ label, placeholder }: { label: string; placeholder: string }) {
  return (
    <label className="block">
      <span className={CAPTION}>{label}</span>
      <input placeholder={placeholder} className={clsx(FIELD, "placeholder:text-[#858585]")} />
    </label>
  );
}

function SelectBox({ label, value }: { label: string; value: string }) {
  return (
    <div className="relative flex-1">
      <select aria-label={label} className={clsx(FIELD, "appearance-none text-[#777]")}>
        <option>{value}</option>
      </select>
      <Chevron className="absolute right-4 top-3 text-[#2c3e50]" />
    </div>
  );
}

function Properties() {
  const [restraint, setRestraint] = useState("Free");
  return (
    <section className="flex w-[414px] shrink-0 flex-col">
      <PanelHeader title="Properties" />
      <div role="tablist" className="mt-[3px] flex h-8 shrink-0 items-center bg-[#f7f7f7] pl-[5px] text-[15px] text-[#8a8a8a]">
        {PROPERTY_TABS.map((tab, i) => (
          <button
            key={tab.icon}
            type="button"
            role="tab"
            aria-selected={tab.icon === "edit"}
            className={clsx(
              "flex h-[30px] items-center gap-1 pl-1",
              i === 4 ? "w-[82px]" : "w-[79px]",
              tab.icon === "edit" && "bg-[#efefef] text-black",
            )}
          >
            <Icon name={tab.icon} size="size-5" />
            <span className="flex-1 text-left leading-5">{tab.label}</span>
            {i !== 2 && i !== 3 && <span className="h-5 w-px bg-[#b0b0b0]" />}
          </button>
        ))}
      </div>
      <div className="mb-1 flex-1 border-x-2 border-b-2 border-[#b0b0b0] text-[14px] text-[#2c3e50]">
        <header className="mx-[2px] h-[73px] border-b-2 border-[#c8c8c8] px-[11px] pt-[13px]">
          <h3 className="text-[21px] leading-7">Node Properties</h3>
          <p className="leading-5">Defaults</p>
        </header>
        <div className="pl-[10px] pr-[11px] pt-[18px]">
          <TextField label="Name" placeholder="(none)" />
          <div className="mt-4">
            <span className={CAPTION}>Colour</span>
            <div className="flex items-center">
              <span className="w-[41px] pl-[6px]">
                <Icon name="noColour" />
              </span>
              <SelectBox label="Colour" value="(none)" />
            </div>
          </div>
          <fieldset className="mt-7">
            <legend className="h-5 leading-5">Position (m)</legend>
            <div className="grid grid-cols-3 gap-2">
              {["X", "Y", "Z"].map((axis) => (
                <input key={axis} aria-label={`Position ${axis}`} defaultValue="0" className={clsx(FIELD, "text-[#222]")} />
              ))}
            </div>
          </fieldset>
          <div className="mt-4">
            <span className={CAPTION}>Axis</span>
            <SelectBox label="Axis" value="Global" />
          </div>
          <span className="mt-7 block h-[22px] leading-[18px]">Restraint</span>
          <div className="-ml-[3px] flex gap-2 font-['Liberation_Sans',sans-serif] text-[18px]">
            {["Free", "Pin", "Fix"].map((kind) => (
              <button
                key={kind}
                type="button"
                onClick={() => setRestraint(kind)}
                className={clsx(
                  "h-[27px] w-[53px] border-2 border-[#005cb8] leading-5",
                  kind === restraint ? "bg-[#005cb8] text-white" : "bg-white text-[#005cb8]",
                )}
              >
                {kind}
              </button>
            ))}
          </div>
          <div className="flex pt-[5px] pl-px">
            {["x", "y", "z", "xx", "yy", "zz"].map((dof, i) => (
              <label key={dof} className={clsx("flex w-[26px] flex-col items-center", i < 5 && (i % 2 ? "mr-4" : "mr-[17px]"))}>
                <span className="h-[22px] leading-4">{dof}</span>
                <input type="checkbox" className="size-6 appearance-none rounded-[3px] border-2 border-[#6a6a6a] bg-white" />
              </label>
            ))}
          </div>
          <div className="mt-[6px] grid grid-cols-3 gap-2">
            {["Spring property", "Mass property", "Damper property"].map((label) => (
              <div key={label}>
                <span className={CAPTION}>{label}</span>
                <SelectBox label={label} value="(none)" />
              </div>
            ))}
          </div>
          <div className="mt-4">
            <TextField label="Local element size (m)" placeholder="(none)" />
          </div>
        </div>
      </div>
    </section>
  );
}

/* ---------- results and status bar ---------- */

function Results() {
  return (
    <section className="flex h-[267px] shrink-0 flex-col">
      <PanelHeader title="Results" />
      <div role="tablist" className="mt-[3px] flex h-[34px] shrink-0 items-center bg-[#f7f7f7] pt-px pl-[5px] text-[15px] text-[#8a8a8a]">
        <button type="button" role="tab" aria-selected="false" className="flex h-[30px] w-[109px] items-center gap-1 pl-1">
          <Icon name="messages" size="size-5" />
          Messages
        </button>
        <button type="button" role="tab" aria-selected="true" className="flex h-[30px] w-[90px] items-center gap-1 border-r-2 border-black bg-[#efefef] pl-1 text-black">
          <Icon name="output" size="size-5" />
          Results
        </button>
        <button type="button" role="tab" aria-selected="false" className="flex h-[30px] items-center gap-1 pl-[6px]">
          <Icon name="report" size="size-5" />
          Reports
          <span className="ml-1 h-5 w-px bg-[#b0b0b0]" />
        </button>
      </div>
      <div className="flex-1 border-x-2 border-b-2 border-[#bcbcbc] px-[2px] pt-px text-black">
        <Combo
          label="Displayed result"
          value="<displayed result>"
          className="rounded-[2px] border border-[#c4c4c4] bg-[#fdfdfd] font-['Liberation_Sans',sans-serif] text-[14px]"
        />
        <p className="pl-5 pt-[2px] text-[14px] leading-5">No data selected</p>
      </div>
    </section>
  );
}

function StatusBar() {
  const field = "border-2 border-[#b8b8b8] bg-[#f0f2f5] text-[14px]";
  return (
    <footer className="flex h-[29px] shrink-0 items-center border-t border-[#d8d8d8] bg-[#f0f0f0] pt-px text-[15px] text-black">
      <a href="https://www.oasys-software.com" className="ml-1 w-[214px] text-[#0066cc] underline">
        www.oasys-software.com
      </a>
      <span className="h-5 w-px bg-[#b0b0b0]" />
      <span className="flex-1" />
      <span className="w-[406px] whitespace-pre font-['Open_Sans',sans-serif]">kN  (m, mm, cm)  t  N/mm²  (s, min, day)  °C  m/s²  MJ</span>
      <span className="h-5 w-px bg-[#b0b0b0]" />
      <span className="ml-[13px] w-[495px] whitespace-nowrap">Steel: BS EN 1993-1-1:2005, Concrete: &lt;generic concrete&gt;</span>
      <Combo label="Grid" value="Global grid" className={clsx(field, "w-[187px]")} height="h-[26px]" chevron="top-2 text-[#555]" />
      <Combo label="Grid layout" value="1 : Default grid layout" className={clsx(field, "w-[187px]")} height="h-[26px]" chevron="top-2 text-[#555]" />
      <span className="ml-[13px] w-[75px]">Modified</span>
    </footer>
  );
}

/* ---------- window ---------- */

const MENUS = ["File", "Edit", "View", "Model", "Graphics", "Sculpt", "Analysis", "Design", "Tools", "Window", "Help"];

function WindowButtons({ size, gap }: { size: string; gap: string }) {
  const paths = [
    { name: "Minimise", d: "M1 6h10" },
    { name: "Restore", d: "M1 4h7v7H1zM4 4V1h7v7H8" },
    { name: "Close", d: "M1 1l10 10M11 1L1 11" },
  ];
  return (
    <div className={clsx("ml-auto flex items-center", gap)}>
      {paths.map((p) => (
        <button key={p.name} type="button" aria-label={p.name}>
          <svg viewBox="0 0 12 12" className={size} fill="none" stroke="currentColor" aria-hidden="true">
            <path d={p.d} />
          </svg>
        </button>
      ))}
    </div>
  );
}

export default function App() {
  return (
    <div className="flex h-screen flex-col overflow-hidden bg-white font-['Noto_Sans',sans-serif] text-[15px] text-black">
      <svg className="absolute size-0" aria-hidden="true">
        <defs>
          <linearGradient id="spectrum" x1="0" y1="0" x2="1" y2="1">
            <stop offset="0.05" stopColor="#3030e0" />
            <stop offset="0.3" stopColor="#60d0f0" />
            <stop offset="0.55" stopColor="#f8f060" />
            <stop offset="0.8" stopColor="#f08020" />
            <stop offset="1" stopColor="#e01010" />
          </linearGradient>
        </defs>
      </svg>

      <header className="flex h-8 shrink-0 items-center bg-[#f3f3f3] pl-1 pr-6 font-['Open_Sans',sans-serif] text-[16px] text-[#8c8c8c]">
        <svg viewBox="0 0 20 20" className="mr-[9px] size-5" aria-hidden="true">
          <path d="M10 0l9 5v10l-9 5-9-5V5z" fill="#12a5bc" />
          <path d="M10 2l7 4v8l-7 4-7-4V6z" fill="#111" />
          <path d="M13 7.500C10 4.500 6 6.500 6 10s4 5.500 7 3v-2.500h-3" fill="none" stroke="#19c4dd" strokeWidth="1.800" />
        </svg>
        <h1>Oasys GSA - [Gsa1 : Graphic 4]</h1>
        <WindowButtons size="size-[14px]" gap="gap-12" />
      </header>

      <nav className="flex h-[30px] shrink-0 items-center pr-[7px] font-['Open_Sans',sans-serif]">
        <Grip />
        <svg viewBox="0 0 22 22" className="mr-1 size-[22px]" aria-hidden="true">
          {shapes}
        </svg>
        {MENUS.map((menu) => (
          <button key={menu} type="button" className="px-[11px] leading-6">
            {menu}
          </button>
        ))}
        <div className="ml-auto pt-[6px] text-[#444]">
          <WindowButtons size="size-[11px]" gap="gap-3" />
        </div>
      </nav>

      <div className="flex h-[38px] shrink-0 border-t border-[#b4b4b4]">
        <ToolGroup tools={FILE_TOOLS} />
        <div className="w-[5px]" />
        <ToolGroup tools={FORMAT_TOOLS} />
        <ToolGroup tools={MODEL_TOOLS} />
      </div>
      <div className="flex h-[38px] shrink-0 border-b-2 border-[#a8a8a8]">
        <ToolGroup tools={SCULPT_TOOLS} />
        <ToolGroup tools={CONTOUR_TOOLS} />
        <ToolGroup tools={LABEL_TOOLS} />
        <ToolGroup tools={DIAGRAM_TOOLS} />
        <ToolGroup tools={["ok"]}>
          <Combo label="Sculpt mode" value="Move selection" className="mx-1 w-[176px] bg-[#f0f0f0] leading-5" height="h-[22px]" chevron="top-2 text-[#b0b0b0]" />
        </ToolGroup>
        <ToolGroup tools={SPLIT_TOOLS} />
      </div>

      <div className="flex min-h-0 flex-1">
        <aside className="flex w-[39px] shrink-0 flex-col gap-8">
          <SideTools tools={VIEW_TOOLS} side="left" />
          <SideTools tools={MOUSE_TOOLS} side="left" />
        </aside>
        <div className="flex min-w-0 flex-1 flex-col">
          <main className="flex min-h-0 flex-1 gap-[5px]">
            <Explorer />
            <GraphicPane />
            <Properties />
          </main>
          <Results />
        </div>
        <aside className="w-[37px] shrink-0">
          <SideTools tools={DISPLAY_TOOLS} side="right" />
        </aside>
      </div>
      <StatusBar />
    </div>
  );
}
